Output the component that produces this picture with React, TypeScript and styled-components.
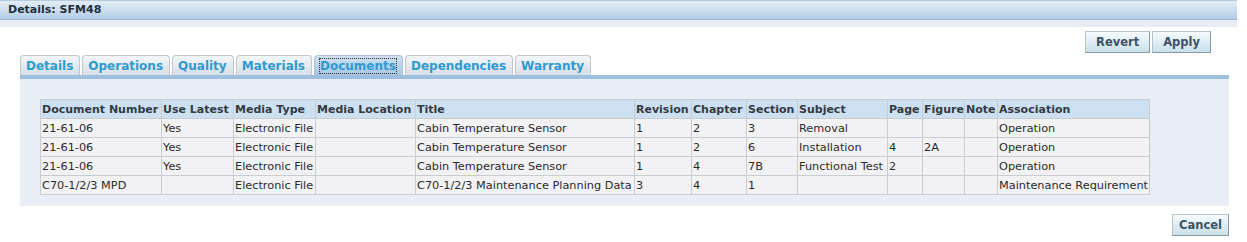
import styled, { createGlobalStyle } from "styled-components";

const tabs = ["Details", "Operations", "Quality", "Materials", "Documents", "Dependencies", "Warranty"];

const columns = [
  { name: "Document Number", width: 121 },
  { name: "Use Latest", width: 72 },
  { name: "Media Type", width: 82 },
  { name: "Media Location", width: 100 },
  { name: "Title", width: 219 },
  { name: "Revision", width: 57 },
  { name: "Chapter", width: 55 },
  { name: "Section", width: 51 },
  { name: "Subject", width: 90 },
  { name: "Page", width: 35 },
  { name: "Figure", width: 42 },
  { name: "Note", width: 33 },
  { name: "Association", width: 152 },
];

const rows = [
  ["21-61-06", "Yes", "Electronic File", "", "Cabin Temperature Sensor", "1", "2", "3", "Removal", "", "", "", "Operation"],
  ["21-61-06", "Yes", "Electronic File", "", "Cabin Temperature Sensor", "1", "2", "6", "Installation", "4", "2A", "", "Operation"],
  ["21-61-06", "Yes", "Electronic File", "", "Cabin Temperature Sensor", "1", "4", "7B", "Functional Test", "2", "", "", "Operation"],
  ["C70-1/2/3 MPD", "", "Electronic File", "", "C70-1/2/3 Maintenance Planning Data", "3", "4", "1", "", "", "", "", "Maintenance Requirement"],
];

function App() {
  return (
    <Page>
      <GlobalStyles />
      <Header>Details: SFM48</Header>
      <Strip />

      <Body>
        <TopActions>
          <Button $pad={10}>Revert</Button>
          <Button $pad={10}>Apply</Button>
        </TopActions>

        <TabBar>
          {tabs.map((t) => (
            <Tab key={t} $active={t === "Documents"}>
              {t === "Documents" ? <Focused>{t}</Focused> : t}
            </Tab>
          ))}
        </TabBar>

        <Panel>
          <Table>
            <colgroup>
              {columns.map((c) => (
                <col key={c.name} style={{ width: c.width }} />
              ))}
            </colgroup>
            <thead>
              <tr>
                {columns.map((c) => (
                  <Th key={c.name}>{c.name}</Th>
                ))}
              </tr>
            </thead>
            <tbody>
              {rows.map((r, i) => (
                <tr key={i}>
                  {r.map((v, j) => (
                    <Td key={j}>{v}</Td>
                  ))}
                </tr>
              ))}
            </tbody>
          </Table>
        </Panel>

        <BottomActions>
          <Button $pad={6}>Cancel</Button>
        </BottomActions>
      </Body>
    </Page>
  );
}

export default App;

const Page = styled.div`
  width: 1237px;
  font-family: "DejaVu Sans", Tahoma, sans-serif;
`;

const Header = styled.div`
  height: 20px;
  border-top: 1px solid #b4cbe2;
  border-bottom: 1px solid #9bb8d6;
  background: linear-gradient(#e4edf6, #b3cde6);
  padding-left: 8px;
  font-size: 11px;
  font-weight: bold;
  line-height: 18px;
  color: #22303c;
`;

const Strip = styled.div`
  height: 7px;
  background: #e8edf5;
`;

const Body = styled.div`
  padding: 4px 8px 0 20px;
`;

const TopActions = styled.div`
  display: flex;
  justify-content: flex-end;
  gap: 2px;
  padding-right: 18px;
`;

const BottomActions = styled.div`
  display: flex;
  justify-content: flex-end;
  padding-top: 8px;
`;

const Button = styled.button<{ $pad: number }>`
  height: 22px;
  padding: 0 ${(p) => p.$pad}px;
  border: 1px solid #8a98a5;
  border-top-color: #b7c3cc;
  border-left-color: #b7c3cc;
  background: linear-gradient(#f6fbfd, #c8e0ea);
  font-family: "DejaVu Sans", Tahoma, sans-serif;
  font-size: 11.5px;
  font-weight: bold;
  color: #3b5366;
  cursor: pointer;
`;

const TabBar = styled.div`
  display: flex;
  gap: 2px;
  margin-top: 2px;
  border-bottom: 4px solid #9ebfdd;
`;

const Tab = styled.div<{ $active?: boolean }>`
  height: 20px;
  padding: 0 6px 0 5px;
  border: 1px solid ${(p) => (p.$active ? "#a9c4de" : "#c3c7cb")};
  border-bottom: none;
  border-radius: 4px 4px 0 0;
  background: ${(p) =>
    p.$active ? "linear-gradient(#cfe0f0, #a8c7e3)" : "linear-gradient(#f3f6f8, #d6e0e8)"};
  font-size: 12px;
  font-weight: bold;
  line-height: 20px;
  color: #2f9ad0;
`;

const Focused = styled.span`
  outline: 1px dotted #333;
  outline-offset: 0;
`;

const Panel = styled.div`
  background: #e9eef6;
  padding: 20px 0 11px 20px;
`;

const Table = styled.table`
  border-collapse: collapse;
  table-layout: fixed;
  width: 1109px;
  font-size: 11.3px;
`;

const Th = styled.th`
  height: 19px;
  padding: 0 1px;
  border: 1px solid #c9cdd2;
  background: #cde0f1;
  text-align: left;
  font-size: 11px;
  font-weight: bold;
  color: #333b42;
  white-space: nowrap;
  overflow: hidden;
`;

const Td = styled.td`
  height: 19px;
  padding: 0 1px;
  border: 1px solid #c9cdd2;
  background: #f2f2f4;
  color: #2b2b2b;
  white-space: nowrap;
  overflow: hidden;
`;

const GlobalStyles = createGlobalStyle`
  * {
    box-sizing: border-box;
  }
  body {
    margin: 0;
    background: #ffffff;
  }
`;
